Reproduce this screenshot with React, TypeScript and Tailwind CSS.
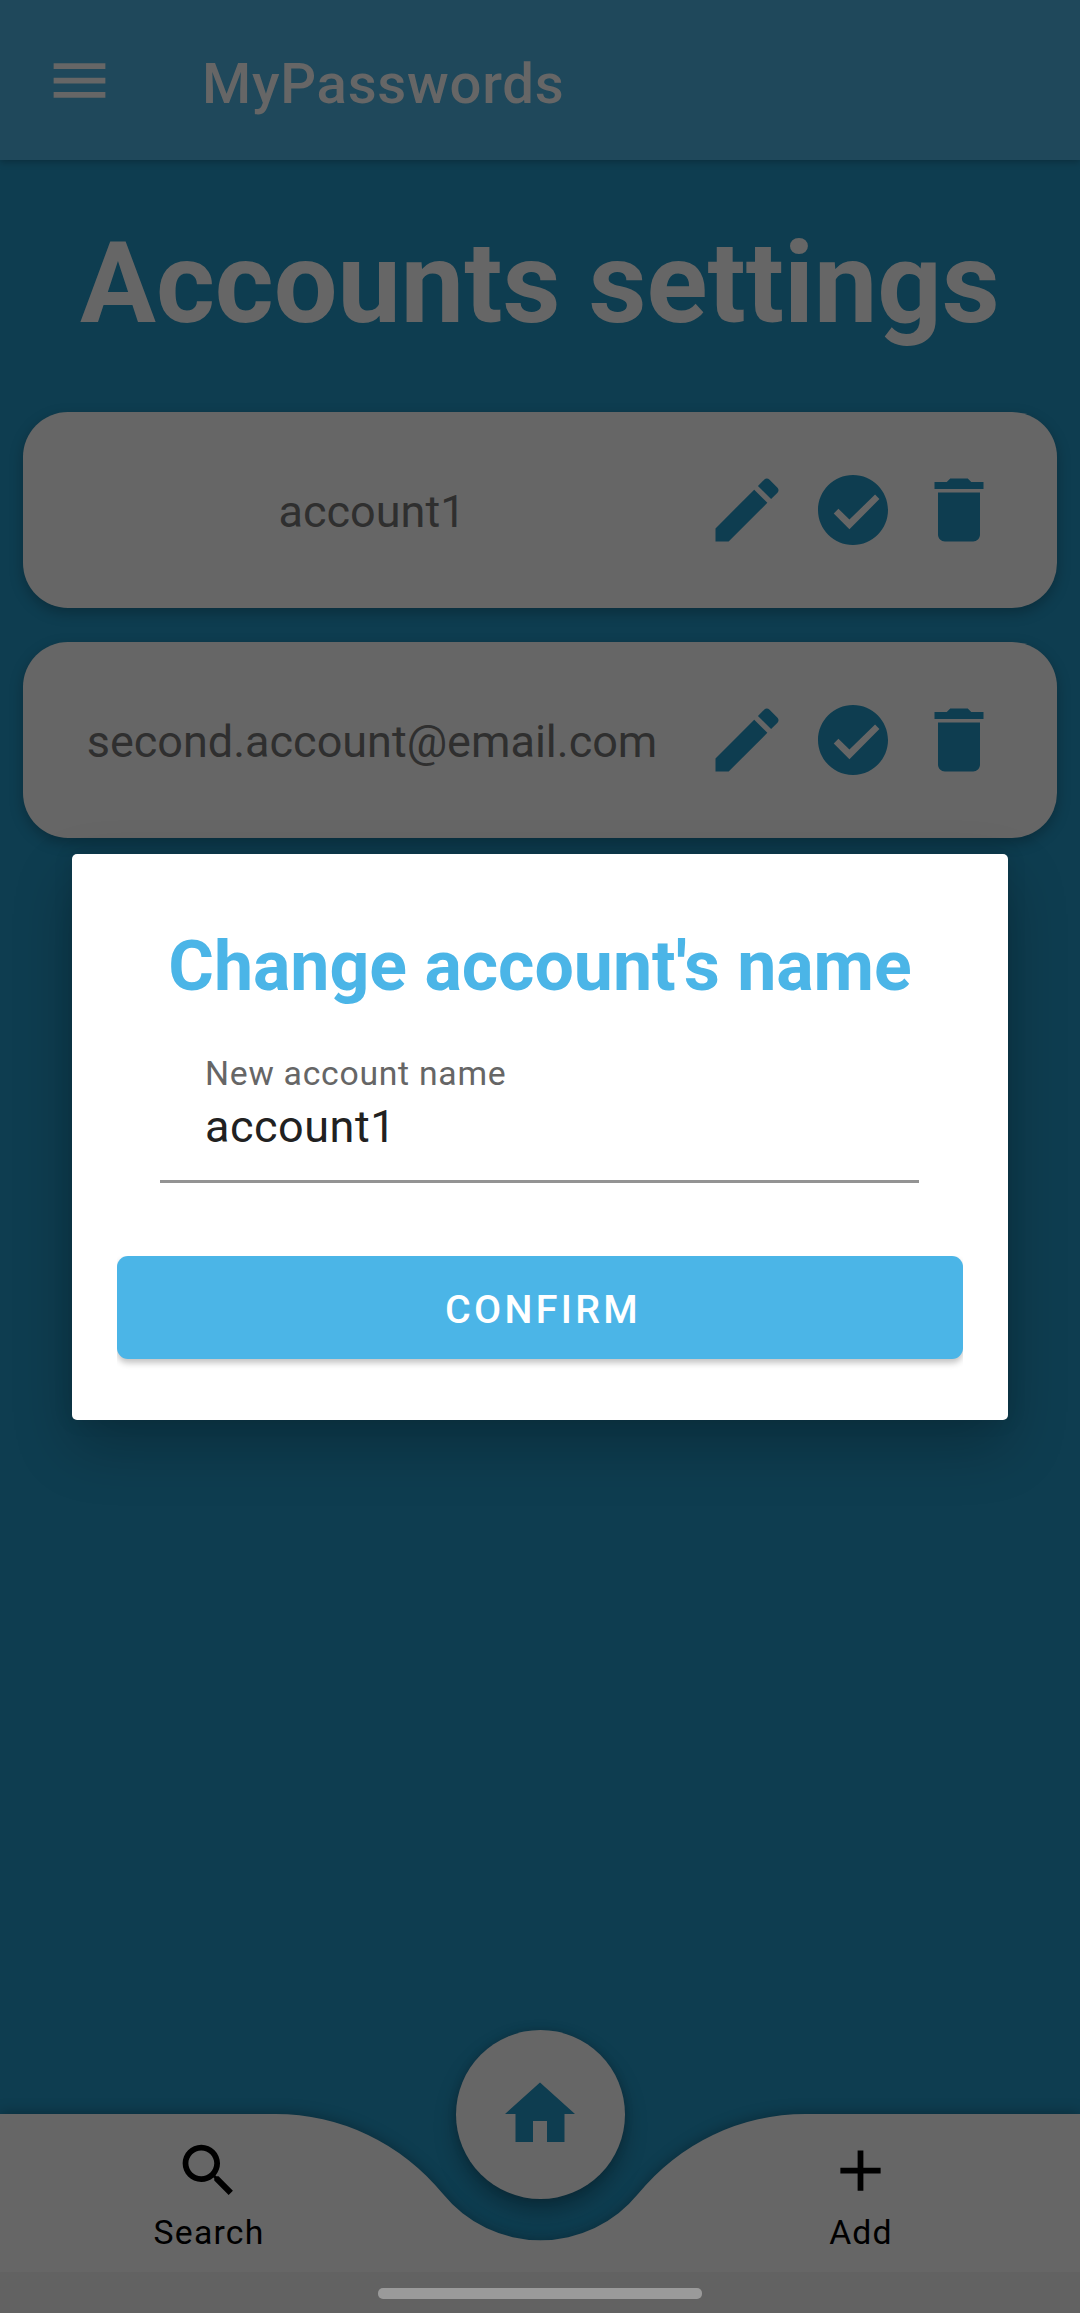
const accounts = ["account1", "second.account@email.com"];

const ICONS = {
  menu: "M3 18h18v-2H3v2zm0-5h18v-2H3v2zm0-7v2h18V6H3z",
  edit: "M3 17.25V21h3.75L17.81 9.94l-3.75-3.75L3 17.25zM20.71 7.04c.39-.39.39-1.02 0-1.41l-2.34-2.34c-.39-.39-1.02-.39-1.41 0l-1.83 1.83 3.75 3.75 1.83-1.83z",
  check:
    "M12 2C6.48 2 2 6.48 2 12s4.48 10 10 10 10-4.48 10-10S17.52 2 12 2zM10.98 17.5L6.5 13.02 7.83 11.62 10.98 14.7 18.3 7.6 19.55 8.88z",
  trash:
    "M6 19c0 1.1.9 2 2 2h8c1.1 0 2-.9 2-2V7H6v12zM19 4h-3.5l-1-1h-5l-1 1H5v2h14V4z",
  home: "M10 20v-6h4v6h5v-8h3L12 3 2 12h3v8z",
  search:
    "M15.5 14h-.79l-.28-.27C15.41 12.59 16 11.11 16 9.5 16 5.91 13.09 3 9.5 3S3 5.91 3 9.5 5.91 16 9.5 16c1.61 0 3.09-.59 4.23-1.57l.27.28v.79l5 4.99L20.49 19l-4.99-5zm-6 0C7.01 14 5 11.99 5 9.5S7.01 5 9.5 5 14 7.01 14 9.5 11.99 14 9.5 14z",
  add: "M19 13h-6v6h-2v-6H5v-2h6V5h2v6h6v2z",
};

function Icon({ name, className }: { name: keyof typeof ICONS; className: string }) {
  return (
    <svg viewBox="0 0 24 24" fill="currentColor" fillRule="evenodd" aria-hidden="true" className={className}>
      <path d={ICONS[name]} />
    </svg>
  );
}

function AccountCard({ name }: { name: string }) {
  return (
    <li className="flex h-[196px] items-center rounded-[45px] bg-[#666666] pr-[56px] pl-[30px] shadow-[0_5px_14px_rgba(0,0,0,0.25)]">
      <span className="flex-1 pt-[3px] text-center text-[45px] leading-[54px] text-[#2f2f2f]">{name}</span>
      <div className="flex gap-[22px] text-[#0e3d50]">
        <button aria-label="Edit" className="ml-[14px]">
          <Icon name="edit" className="size-[84px]" />
        </button>
        <button aria-label="Select">
          <Icon name="check" className="size-[84px]" />
        </button>
        <button aria-label="Delete">
          <Icon name="trash" className="size-[84px]" />
        </button>
      </div>
    </li>
  );
}

function RenameDialog() {
  return (
    <div
      role="dialog"
      className="absolute top-[854px] left-[72px] flex h-[566px] w-[936px] flex-col rounded-[5px] bg-white px-[45px] pt-[72px] shadow-[0_26px_60px_rgba(0,0,0,0.24),0_0_20px_rgba(0,0,0,0.1)]"
    >
      <h2 className="text-center text-[69.8px] leading-[81px] font-bold whitespace-nowrap text-[#4bb5e7]">
        Change account's name
      </h2>
      <div className="mx-[43px] mt-[47px] flex h-[129px] w-[759px] flex-col border-b-[3px] border-[#939393] pl-[45px]">
        <label className="text-[33.75px] leading-[40px] tracking-[0.72px] text-[#666666]">New account name</label>
        <span className="mt-[6px] text-[45px] leading-[54px] tracking-[0.5px] text-[#212121]">account1</span>
      </div>
      <div className="mt-[73px] h-[120px] overflow-hidden">
        <button className="flex h-[103px] w-full items-center justify-center rounded-[11px] bg-[#4bb5e7] pt-[4px] pl-[6px] text-[39.4px] leading-[47px] font-medium tracking-[3.3px] text-white shadow-[0_4px_6px_rgba(0,0,0,0.24)]">
          CONFIRM
        </button>
      </div>
    </div>
  );
}

function BottomBar() {
  return (
    <footer className="relative mt-auto h-[199px] text-black">
      <svg
        viewBox="0 0 1080 199"
        className="absolute inset-0 h-[199px] w-[1080px] overflow-visible drop-shadow-[0_-1px_7px_rgba(0,0,0,0.28)]"
        aria-hidden="true"
      >
        <path
          d="M0 0H275.5A215.7 215.7 0 0 1 442.6 79.6A126 126 0 0 0 638.4 79.6A215.7 215.7 0 0 1 805.5 0H1080V199H0Z"
          fill="#666666"
        />
      </svg>
      <nav className="relative flex h-[158px] justify-between pr-[147px] pl-[135px] pt-[22px]">
        <button className="flex w-[146px] flex-col items-center">
          <Icon name="search" className="size-[69px]" />
          <span className="mt-[8px] pl-[2px] text-[33.75px] leading-[40px] tracking-[1.2px]">Search</span>
        </button>
        <button className="flex w-[146px] flex-col items-center">
          <Icon name="add" className="size-[69px]" />
          <span className="mt-[8px] pl-[2px] text-[33.75px] leading-[40px] tracking-[1.2px]">Add</span>
        </button>
      </nav>
      <button
        aria-label="Home"
        className="absolute -top-[84px] left-[456px] flex size-[169px] items-center justify-center rounded-full bg-[#666666] pr-[1px] pb-[1px] text-[#0e3d50] shadow-[0_12px_22px_rgba(0,0,0,0.28),0_0_8px_rgba(0,0,0,0.16)]"
      >
        <Icon name="home" className="size-[84px]" />
      </button>
      <div className="relative flex h-[41px] justify-center bg-[#626262] pt-[16px]">
        <div className="h-[11px] w-[324px] rounded-[5px] bg-[#9a9a9a]" />
      </div>
    </footer>
  );
}

export default function App() {
  return (
    <div className="relative flex h-[2313px] w-[1080px] flex-col overflow-hidden bg-[#0e3d50] font-['Roboto',sans-serif]">
      <header className="flex h-[160px] shrink-0 items-center bg-[#1f485b] pl-[44.5px] text-[#666666] shadow-[0_2px_7px_rgba(0,0,0,0.25)]">
        <button aria-label="Menu">
          <Icon name="menu" className="size-[69px]" />
        </button>
        <span className="mt-[8px] ml-[88.5px] text-[56.25px] leading-[67px] font-medium tracking-[0.75px]">
          MyPasswords
        </span>
      </header>
      <main className="flex flex-col px-[23px] pt-[56px]">
        <h1 className="text-center text-[113px] leading-[135px] font-bold whitespace-nowrap text-[#666666]">
          Accounts settings
        </h1>
        <ul className="mt-[61px] flex flex-col gap-[34px]">
          {accounts.map((name) => (
            <AccountCard key={name} name={name} />
          ))}
        </ul>
      </main>
      <BottomBar />
      <RenameDialog />
    </div>
  );
}
